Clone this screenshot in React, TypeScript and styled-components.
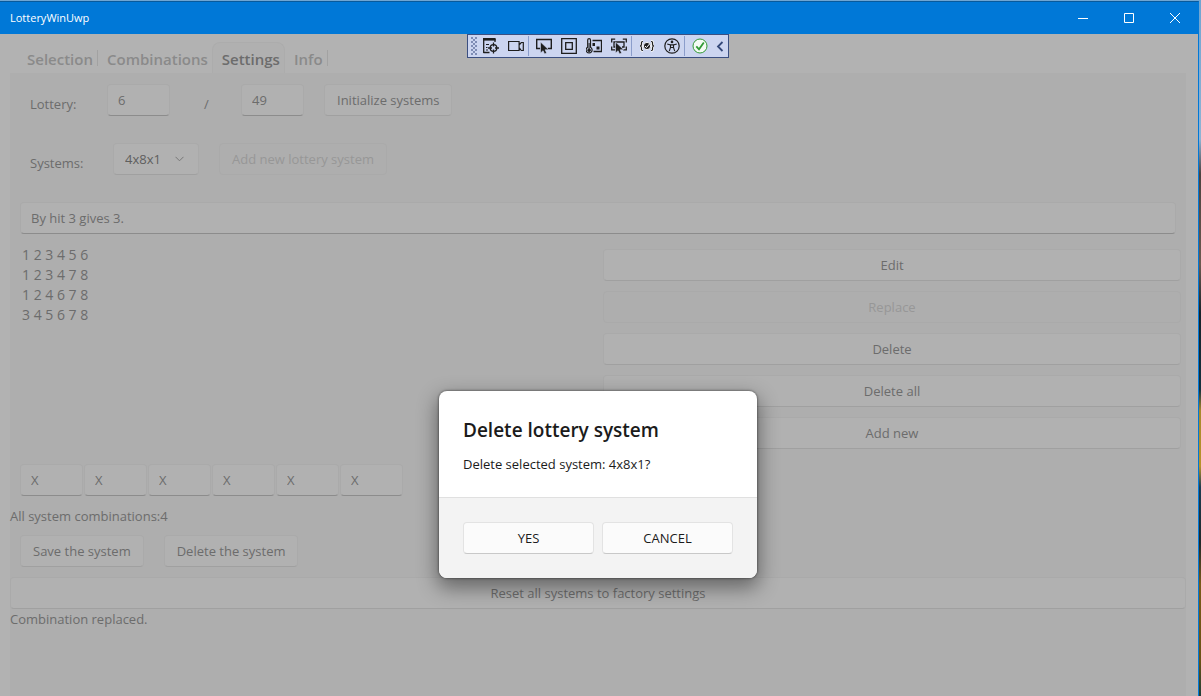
import React, { useState } from 'react';
import styled, { createGlobalStyle, css } from 'styled-components';

const colors = {
  accent: '#0078d7',
  page: '#b2b2b2',
  panel: '#aeaeae',
  control: '#b1b1b1',
  edge: '#aaaaaa',
  edgeStrong: '#a0a0a0',
  underline: '#8c8c8c',
  text: '#6c6c6c',
  muted: '#979797',
};

const GlobalStyle = createGlobalStyle`
  * { box-sizing: border-box; }
  body { margin: 0; }
  body, button, input, select {
    font-family: "Open Sans", "Noto Sans", sans-serif;
    font-size: 13px;
    line-height: 20px;
  }
`;

const Desktop = styled.div`
  min-height: 100vh;
  display: flex;
  padding: 1px 2px 0 0;
  background: linear-gradient(
    #6fa5d2 0, #8fb4d4 20%, #4b4340 25%, #6b5a50 38%, #17242b 45%, #15323f 56%,
    #a8882c 59%, #b8922a 67%, #1d3d52 70%, #20292a 78%, #7a5a1a 84%, #6a5216 95%, #1f3f38
  );
`;

const Window = styled.div`
  position: relative;
  flex: 1;
  min-width: 0;
  display: flex;
  flex-direction: column;
  border-top: 1px solid #085a9c;
  border-right: 1px solid ${colors.accent};
  background: ${colors.page};
  color: ${colors.text};
`;

const TitleBar = styled.header`
  height: 32px;
  display: flex;
  align-items: center;
  justify-content: space-between;
  padding-left: 10px;
  background: ${colors.accent};
  color: #fff;
`;

const AppName = styled.span`
  font-size: 11px;
  line-height: 16px;
`;

const WindowControls = styled.div`
  display: flex;
`;

const CaptionButton = styled.button`
  width: 46px;
  height: 32px;
  display: grid;
  place-items: center;
  padding: 0;
  border: 0;
  background: transparent;
  color: #fff;
`;

const DebugDock = styled.div`
  position: absolute;
  inset: 32px 2px auto 0;
  display: flex;
  justify-content: center;
`;

const DebugBar = styled.div`
  height: 24px;
  display: flex;
  align-items: center;
  padding: 0 1px 0 3px;
  border: 1px solid #3b4f81;
  background: #ccd5f0;
`;

const Grip = styled.span`
  width: 6px;
  height: 18px;
  margin-right: 1px;
  background: radial-gradient(circle at 1px 1px, #7f8db5 1px, transparent 1px) 0 0 / 4px 4px,
    radial-gradient(circle at 1px 1px, #7f8db5 1px, transparent 1px) 2px 2px / 4px 4px;
`;

const ToolButton = styled.button<{ $narrow?: boolean }>`
  width: ${(p) => (p.$narrow ? '15px' : '25px')};
  height: 22px;
  display: grid;
  place-items: center;
  padding: 0;
  border: 0;
  background: transparent;
  color: #1e1e1e;
`;

const Divider = styled.span`
  width: 1px;
  height: 20px;
  margin-right: 2px;
  background: #8b9dcb;
`;

const Tabs = styled.nav`
  height: 39px;
  display: flex;
  align-items: flex-end;
  padding: 0 10px 0 23px;
`;

const Tab = styled.button<{ $active?: boolean }>`
  height: 31px;
  padding: 2px 8px 0 3px;
  border: 1px solid transparent;
  border-bottom: 0;
  background: transparent;
  color: #8a8a8a;
  font-size: 15px;
  font-weight: 600;
  line-height: 24px;
  white-space: nowrap;

  ${(p) =>
    p.$active
      ? css`
          padding: 2px 4px 0 9px;
          margin: 0 5px 0 -5px;
          border-color: #acacac;
          border-radius: 8px 8px 0 0;
          background: #b0b0b0;
          color: ${colors.text};
        `
      : ''}
`;

const TabDivider = styled.span`
  width: 1px;
  height: 16px;
  margin: 0 5px 7px -5px;
  background: #a2a2a2;
`;

const Panel = styled.main`
  flex: 1;
  margin: 0 12px 0 10px;
  padding-top: 11px;
  background: ${colors.panel};
`;

const FormRow = styled.div`
  display: flex;
  margin-bottom: 27px;
  padding-left: 20px;
`;

const Label = styled.label<{ $width: number }>`
  width: ${(p) => p.$width}px;
  padding-top: 10px;
  margin-bottom: -4px;
`;

const Slash = styled.span`
  width: 71px;
  padding: 10px 0 0 34px;
`;

const controlBox = css`
  height: 32px;
  border: 1px solid ${colors.edge};
  border-radius: 4px;
  background: ${colors.control};
  color: ${colors.text};
`;

const TextBox = styled.input<{ $wide?: boolean }>`
  ${controlBox}
  width: ${(p) => (p.$wide ? '100%' : '63px')};
  padding: 0 10px;
  border-bottom-color: ${colors.underline};
`;

const Button = styled.button`
  ${controlBox}
  padding: 0 12px;
  border-bottom-color: ${colors.edgeStrong};
  white-space: nowrap;

  &:disabled {
    border-color: #aaaaaa;
    background: transparent;
    color: ${colors.muted};
  }
`;

const SelectWrap = styled.div`
  position: relative;
  margin-right: 20px;

  svg {
    position: absolute;
    right: 15px;
    top: 13px;
    pointer-events: none;
  }
`;

const Select = styled.select`
  ${controlBox}
  width: 86px;
  padding: 0 11px;
  border-bottom-color: ${colors.edgeStrong};
  appearance: none;
  color: #5f5f5f;
`;

const Spaced = styled.div`
  margin-left: 20px;
`;

const DescriptionRow = styled.div`
  padding: 0 10px;
`;

const Columns = styled.div`
  display: grid;
  grid-template-columns: 1fr 1fr;
  min-height: 230px;
  padding-top: 10px;
`;

const CombinationList = styled.ul`
  list-style: none;
  margin: 0;
  padding: 1px 12px;
  font-size: 14px;
`;

const Actions = styled.div`
  display: flex;
  flex-direction: column;
  gap: 10px;
  padding: 5px 5px 0;
`;

const NumberRow = styled.div`
  display: flex;
  gap: 1px;
  padding-left: 10px;
`;

const Status = styled.p`
  margin: 0;
`;

const Total = styled(Status)`
  padding: 10px 0 9px;
`;

const ButtonRow = styled.div`
  display: flex;
  gap: 20px;
  padding: 0 10px 10px;
`;

const ResetButton = styled(Button)`
  display: block;
  width: 100%;
`;

const Overlay = styled.div`
  position: absolute;
  inset: 32px 2px 0 0;
  display: flex;
  justify-content: center;
  align-items: flex-start;
  padding-top: 357px;
`;

const Dialog = styled.section`
  width: 318px;
  overflow: hidden;
  border-radius: 8px;
  background: #fff;
  color: #1b1b1b;
  box-shadow: 0 0 2px 1px rgba(0, 0, 0, 0.3), 0 8px 20px 2px rgba(0, 0, 0, 0.42);
`;

const DialogBody = styled.div`
  padding: 25px 24px 23px;
  border-bottom: 1px solid #e0e0e0;
`;

const DialogTitle = styled.h2`
  margin: 0 0 10px;
  font-size: 19px;
  font-weight: 600;
  line-height: 28px;
  white-space: nowrap;
`;

const DialogText = styled.p`
  margin: 0;
`;

const DialogActions = styled.div`
  display: grid;
  grid-template-columns: 1fr 1fr;
  gap: 8px;
  padding: 24px;
  background: #f3f3f3;
`;

const DialogButton = styled.button`
  height: 32px;
  padding: 0;
  border: 1px solid #e3e3e3;
  border-bottom-color: #c8c8c8;
  border-radius: 4px;
  background: #fbfbfb;
  color: #1b1b1b;
`;

const Glyph = ({ children, size = 16 }: { children: React.ReactNode; size?: number }) => (
  <svg width={size} height={size} viewBox={`0 0 ${size} ${size}`} fill="none" stroke="currentColor" aria-hidden="true">
    {children}
  </svg>
);

const Pointer = () => (
  <path d="M4.500 4v11l2.600-2.300L8.600 16l2-1-1.500-3.200h3.600z" fill="currentColor" stroke="#ccd5f0" strokeWidth=".6" />
);

const LiveTreeIcon = () => (
  <Glyph>
    <path d="M.7 15V1M12 1v3M.5 14.500h6" strokeWidth="1.300" />
    <path d="M0 0h12.600v2.600H0z" fill="currentColor" stroke="none" />
    <path d="M3 6.500h3M3 9.500h1.500M3 12h2" />
    <circle cx="10.500" cy="10" r="3.300" strokeWidth="1.300" />
    <path d="M10.500 4.500v4M10.500 11.500v4M5 10h4M12 10h4" strokeWidth="1.300" />
  </Glyph>
);

const CameraIcon = () => (
  <Glyph>
    <path d="M.6 3.500h10.500v9H.6zM11.100 7l2.200-2.500h2v8h-2L11.100 9.500" strokeWidth="1.200" />
  </Glyph>
);

const SelectElementIcon = () => (
  <Glyph>
    <path d="M4.500 10.500H.7v-9h14.600v9h-3.500" strokeWidth="1.400" />
    <Pointer />
  </Glyph>
);

const LayoutIcon = () => (
  <Glyph>
    <path d="M.7.700h14.600v14.600H.7zM4.700 4.700h6.600v6.600H4.700z" strokeWidth="1.300" />
  </Glyph>
);

const ThermometerIcon = () => (
  <Glyph>
    <path d="M1.700 9.300V2a1.400 1.400 0 0 1 2.800 0v7.300a3 3 0 1 1-2.800 0z" strokeWidth="1.200" />
    <path d="M3.100 5v7" />
    <circle cx="3.100" cy="12.200" r="1.300" fill="currentColor" />
    <path d="M6.500 2.500h9v11H7.500" strokeWidth="1.300" />
    <path d="M6.500 5h2.500v3H6.500zM10.500 8.500h3v3h-3z" fill="currentColor" stroke="none" />
  </Glyph>
);

const TrackFocusIcon = () => (
  <Glyph>
    <path d="M.7 4.500V1.200h3.500M11.800 1.200h3.500v3.300M.7 8.500v3.300h3.300M15.300 8.500v3.300H12" strokeWidth="1.300" />
    <path d="M4.500 9H3V4h10v5h-2" strokeWidth="1.300" />
    <Pointer />
  </Glyph>
);

const BindingIcon = () => (
  <Glyph>
    <path d="M4 3.500c-2 0-1.500 1-1.500 2.500S2 8 1 8c1 0 1.500.5 1.500 2s-.5 2.500 1.500 2.500M12 3.500c2 0 1.500 1 1.500 2.500s.5 2 1.500 2c-1 0-1.500.5-1.500 2s.5 2.500-1.500 2.500" stroke="#f5f5f5" strokeWidth="3" />
    <path d="M4 3.500c-2 0-1.500 1-1.500 2.500S2 8 1 8c1 0 1.500.5 1.500 2s-.5 2.500 1.500 2.500M12 3.500c2 0 1.500 1 1.500 2.500s.5 2 1.500 2c-1 0-1.500.5-1.500 2s.5 2.500-1.500 2.500" strokeWidth="1.200" />
    <circle cx="8" cy="8" r="3.600" fill="currentColor" stroke="#f5f5f5" />
    <path d="M6 8l1.500 1.500L10.500 6" stroke="#fff" />
  </Glyph>
);

const AccessibilityIcon = () => (
  <Glyph>
    <circle cx="8" cy="8" r="7.200" strokeWidth="1.200" />
    <circle cx="8" cy="3.900" r="1.300" fill="currentColor" stroke="none" />
    <path d="M3.200 6l3.300 1v2.500L5.300 13.200M12.800 6L9.500 7v2.500l1.200 3.700M6.500 6.900h3M6.500 9.500h3" strokeWidth="1.100" />
  </Glyph>
);

const StatusOkIcon = () => (
  <Glyph>
    <circle cx="8" cy="8" r="7" fill="#f4fbf4" stroke="#319a35" />
    <path d="M4.300 8.300l2.700 3L11.800 4.500" stroke="#319a35" strokeWidth="1.800" />
  </Glyph>
);

const CollapseIcon = () => (
  <Glyph>
    <path d="M10.500 4L6 8.500l4.500 4.500" stroke="#344879" strokeWidth="1.800" />
  </Glyph>
);

const Chevron = () => (
  <svg width="9" height="6" viewBox="0 0 9 6" fill="none" stroke="#777" aria-hidden="true">
    <path d="M.5.800l4 4 4-4" />
  </svg>
);

const tabs = ['Selection', 'Combinations', 'Settings', 'Info'];
const combinations = ['1 2 3 4 5 6', '1 2 3 4 7 8', '1 2 4 6 7 8', '3 4 5 6 7 8'];

export default function App() {
  const [open, setOpen] = useState(true);
  const close = () => setOpen(false);

  return (
    <>
      <GlobalStyle />
      <Desktop>
        <Window>
          <TitleBar>
            <AppName>LotteryWinUwp</AppName>
            <WindowControls>
              <CaptionButton aria-label="Minimize">
                <Glyph size={10}><path d="M0 5.500h10" /></Glyph>
              </CaptionButton>
              <CaptionButton aria-label="Maximize">
                <Glyph size={10}><path d="M.5.500h9v9h-9z" /></Glyph>
              </CaptionButton>
              <CaptionButton aria-label="Close">
                <Glyph size={10}><path d="M0 0l10 10M10 0L0 10" /></Glyph>
              </CaptionButton>
            </WindowControls>
          </TitleBar>

          <Tabs>
            {tabs.map((name) => (
              <React.Fragment key={name}>
                <Tab $active={name === 'Settings'}>{name}</Tab>
                {(name === 'Selection' || name === 'Info') && <TabDivider />}
              </React.Fragment>
            ))}
          </Tabs>

          <Panel>
            <FormRow>
              <Label $width={77} htmlFor="drawn">Lottery:</Label>
              <TextBox id="drawn" defaultValue="6" />
              <Slash>/</Slash>
              <TextBox aria-label="Total numbers" defaultValue="49" />
              <Spaced><Button>Initialize systems</Button></Spaced>
            </FormRow>

            <FormRow>
              <Label $width={83} htmlFor="system">Systems:</Label>
              <SelectWrap>
                <Select id="system" defaultValue="4x8x1">
                  <option>4x8x1</option>
                </Select>
                <Chevron />
              </SelectWrap>
              <Button disabled>Add new lottery system</Button>
            </FormRow>

            <DescriptionRow>
              <TextBox $wide aria-label="Description" defaultValue="By hit 3 gives 3." />
            </DescriptionRow>

            <Columns>
              <CombinationList>
                {combinations.map((c) => <li key={c}>{c}</li>)}
              </CombinationList>
              <Actions>
                <Button>Edit</Button>
                <Button disabled>Replace</Button>
                <Button>Delete</Button>
                <Button>Delete all</Button>
                <Button>Add new</Button>
              </Actions>
            </Columns>

            <NumberRow>
              {[1, 2, 3, 4, 5, 6].map((n) => (
                <TextBox key={n} aria-label={`Number ${n}`} defaultValue="X" />
              ))}
            </NumberRow>
            <Total>All system combinations:4</Total>
            <ButtonRow>
              <Button>Save the system</Button>
              <Button onClick={() => setOpen(true)}>Delete the system</Button>
            </ButtonRow>
            <ResetButton>Reset all systems to factory settings</ResetButton>
            <Status>Combination replaced.</Status>
          </Panel>

          {open && (
            <Overlay>
              <Dialog role="dialog" aria-modal="true" aria-labelledby="dialog-title">
                <DialogBody>
                  <DialogTitle id="dialog-title">Delete lottery system</DialogTitle>
                  <DialogText>Delete selected system: 4x8x1?</DialogText>
                </DialogBody>
                <DialogActions>
                  <DialogButton onClick={close}>YES</DialogButton>
                  <DialogButton onClick={close}>CANCEL</DialogButton>
                </DialogActions>
              </Dialog>
            </Overlay>
          )}

          <DebugDock>
            <DebugBar role="toolbar" aria-label="Debug tools">
              <Grip />
              <ToolButton aria-label="Live visual tree"><LiveTreeIcon /></ToolButton>
              <ToolButton aria-label="Record"><CameraIcon /></ToolButton>
              <Divider />
              <ToolButton aria-label="Select element"><SelectElementIcon /></ToolButton>
              <ToolButton aria-label="Display layout"><LayoutIcon /></ToolButton>
              <ToolButton aria-label="Hot reload"><ThermometerIcon /></ToolButton>
              <ToolButton aria-label="Track focus"><TrackFocusIcon /></ToolButton>
              <Divider />
              <ToolButton aria-label="Binding failures"><BindingIcon /></ToolButton>
              <ToolButton aria-label="Accessibility"><AccessibilityIcon /></ToolButton>
              <Divider />
              <ToolButton aria-label="Status"><StatusOkIcon /></ToolButton>
              <ToolButton $narrow aria-label="Collapse"><CollapseIcon /></ToolButton>
            </DebugBar>
          </DebugDock>
        </Window>
      </Desktop>
    </>
  );
}
